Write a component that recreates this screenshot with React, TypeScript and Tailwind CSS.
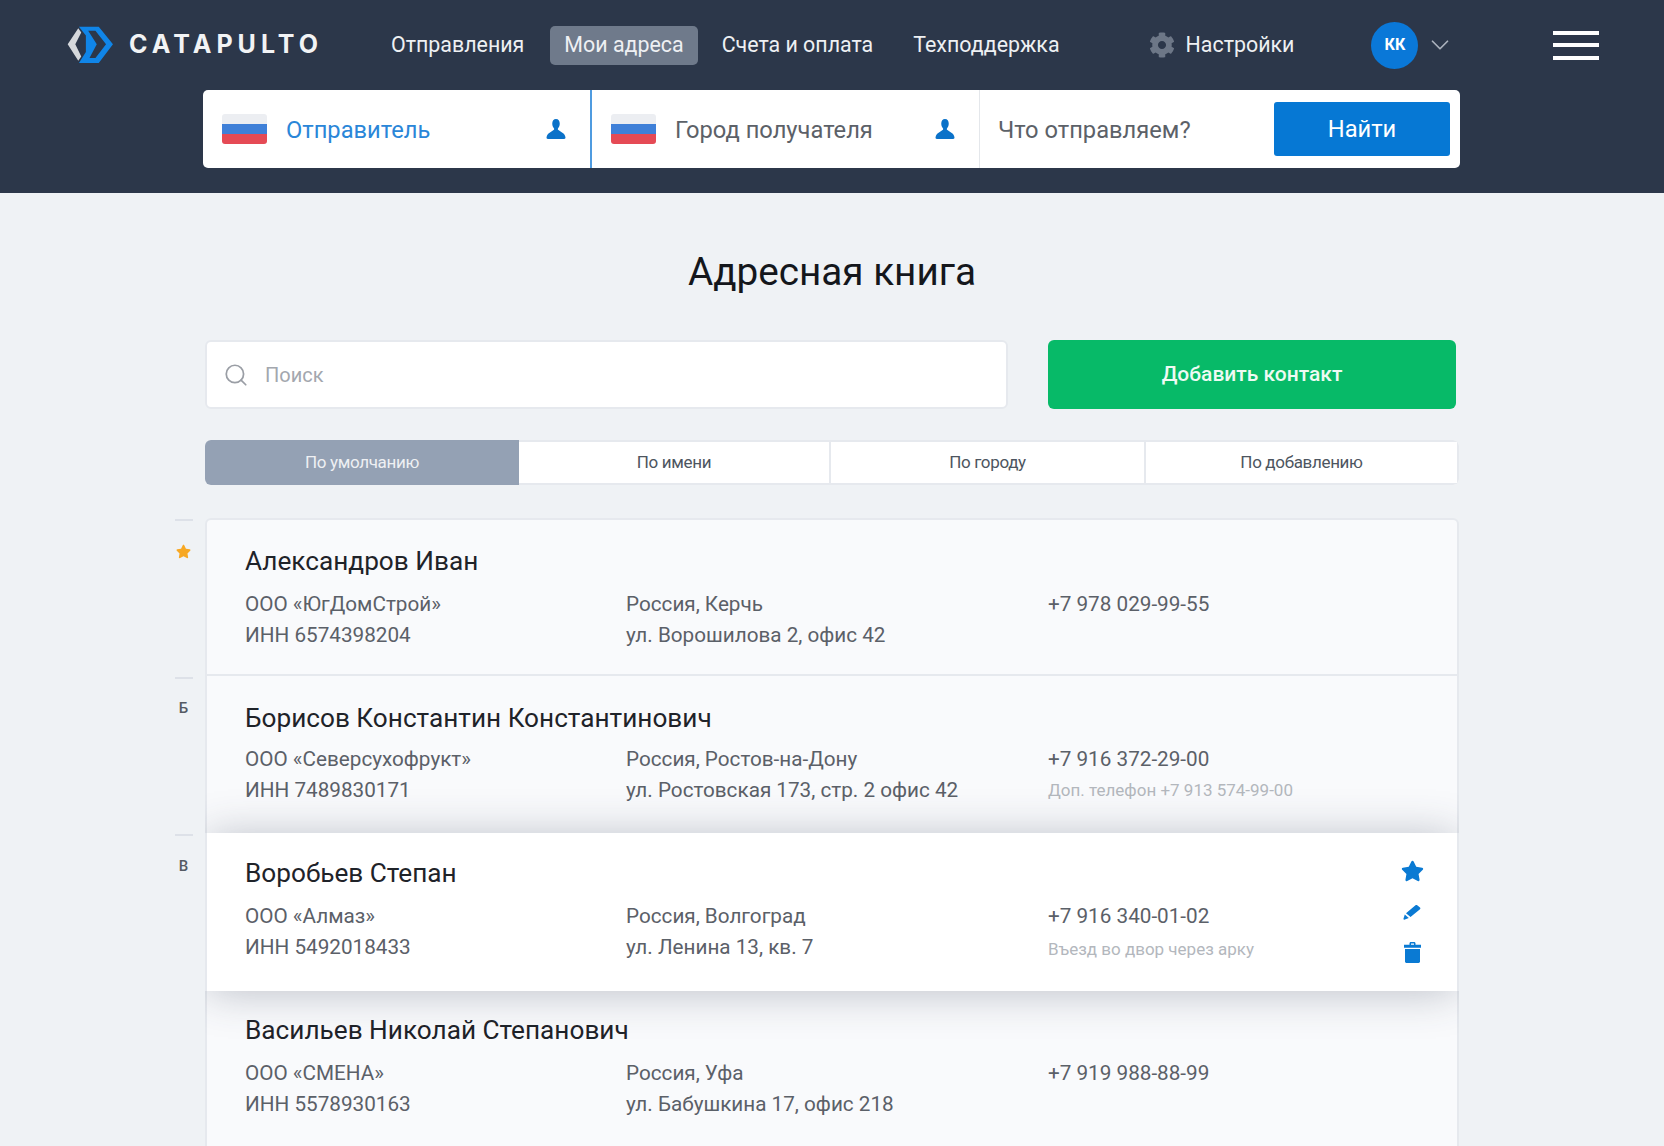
import React from "react";
import { FaCog, FaStar } from "react-icons/fa";
import { Search, ChevronDown } from "lucide-react";

const Flag = () => (
  <div className="flex h-[30px] w-[45px] shrink-0 flex-col overflow-hidden rounded-[3px]">
    <div className="flex-1 bg-[#eceef2]" />
    <div className="flex-1 bg-[#3f80d8]" />
    <div className="flex-1 bg-[#e54a55]" />
  </div>
);

const Person = () => (
  <svg viewBox="0 0 20 20" className="h-[22px] w-[22px] shrink-0" fill="#0b72c9">
    <path d="M10 1c2.200 0 3.400 1.700 3.400 4 0 1.900-.6 3.300-1.500 4.400-.4.500-.3 1.300.3 1.600l3.600 2.400c1.500.8 2.400 2 2.800 4 .1.800-.3 1.600-1.200 1.600H2.600c-.9 0-1.300-.8-1.200-1.600.4-2 1.300-3.200 2.800-4l3.600-2.400c.6-.3.7-1.100.3-1.600C7.200 8.300 6.600 6.900 6.600 5c0-2.300 1.200-4 3.400-4z" />
  </svg>
);

const Logo = () => (
  <svg viewBox="36 33 142 115" className="h-[38px] w-[47px] shrink-0">
    <path d="M70 40 38 88l32 50 9-13-18-37 18-35z" fill="#d5d8dc" />
    <path d="M72 35h60l43 53-43 57H72l21-33V62z" fill="#1085e8" />
    <path d="M100 47h22l32 41-32 42h-18l22-42z" fill="#2c374a" />
  </svg>
);

const Pencil = () => (
  <svg viewBox="0 0 18 16" className="h-[16px] w-[18px]" fill="currentColor">
    <path d="M12.500 1.200c.5-.4 1.200-.4 1.700 0l2.800 2.400c.5.500.5 1.200 0 1.600L7.500 13 3 9.200z" />
    <path d="M1.800 10.500 5.800 14l-3.900 1.600c-.8.300-1.600-.4-1.400-1.200z" />
  </svg>
);

const Trash = () => (
  <svg viewBox="0 0 17 21" className="h-[21px] w-[17px]" fill="currentColor">
    <path d="M5.500 2.800V1.400C5.500.6 6.100 0 6.900 0h3.200c.8 0 1.400.6 1.400 1.400v1.400H17v3H0v-3zM7 1.500v1.300h3V1.500z" fillRule="evenodd" />
    <path d="M1 7h15v12.600c0 .8-.6 1.400-1.400 1.400H2.400c-.8 0-1.400-.6-1.400-1.400z" />
  </svg>
);

type Row = {
  letter: React.ReactNode;
  name: string;
  org: string;
  inn: string;
  city: string;
  addr: string;
  phone: string;
  note?: string;
  active?: boolean;
  first?: boolean;
  noBorder?: boolean;
  top: string;
  gap: string;
  noteCls?: string;
};

const rows: Row[] = [
  { letter: <FaStar className="h-[15px] w-[15px] text-[#f7a823]" />, name: "Александров Иван", org: "ООО «ЮгДомСтрой»", inn: "ИНН 6574398204", city: "Россия, Керчь", addr: "ул. Ворошилова 2, офис 42", phone: "+7 978 029-99-55", first: true, top: "pt-[23px]", gap: "mt-[10px]" },
  { letter: "Б", name: "Борисов Константин Константинович", org: "ООО «Северсухофрукт»", inn: "ИНН 7489830171", city: "Россия, Ростов-на-Дону", addr: "ул. Ростовская 173, стр. 2 офис 42", phone: "+7 916 372-29-00", note: "Доп. телефон +7 913 574-99-00", noBorder: true, top: "pt-[24px]", gap: "mt-[8px]" },
  { letter: "В", name: "Воробьев Степан", org: "ООО «Алмаз»", inn: "ИНН 5492018433", city: "Россия, Волгоград", addr: "ул. Ленина 13, кв. 7", phone: "+7 916 340-01-02", note: "Въезд во двор через арку", active: true, top: "pt-[22px]", gap: "mt-[10px]", noteCls: "mt-[2px]" },
  { letter: "", name: "Васильев Николай Степанович", org: "ООО «СМЕНА»", inn: "ИНН 5578930163", city: "Россия, Уфа", addr: "ул. Бабушкина 17, офис 218", phone: "+7 919 988-88-99", top: "pt-[21px]", gap: "mt-[10px]" },
];

const tabs = [
  { label: "По умолчанию", w: "w-[314px]", on: true },
  { label: "По имени", w: "w-[312px]" },
  { label: "По городу", w: "w-[315px]" },
  { label: "По добавлению", w: "flex-1" },
];

export default function App() {
  return (
    <div className="h-[1146px] overflow-hidden bg-[#eff2f5] font-['Roboto','Liberation_Sans',sans-serif] text-[#2b2f36]">
      <header className="h-[193px] bg-[#2c374a]">
        <div className="flex h-[90px] items-center pl-[67px] text-[21.400px] text-[#eef0f3]">
          <Logo />
          <span className="ml-[15px] w-[190px] font-['Inter',sans-serif] text-[25px] font-bold tracking-[5px] whitespace-nowrap text-[#f2f3f5]">CATAPULTO</span>
          <span className="ml-[72px]">Отправления</span>
          <span className="ml-[26px] flex h-[39px] items-center rounded-[5px] bg-[#6f7a8b] px-[14px]">Мои адреса</span>
          <span className="ml-[24px]">Счета и оплата</span>
          <span className="ml-[40px]">Техподдержка</span>
          <FaCog className="ml-[89px] h-[26px] w-[26px] text-[#6d7787]" />
          <span className="ml-[11px]">Настройки</span>
          <span className="ml-[77px] flex h-[47px] w-[47px] items-center justify-center rounded-full bg-[#0a78d8] text-[16px] font-bold text-white">КК</span>
          <ChevronDown className="ml-[7px] h-[30px] w-[30px] text-[#aab1bc]" strokeWidth={1.4} />
          <div className="ml-[98px] flex w-[46px] flex-col gap-[8.500px]">
            <div className="h-[4px] bg-white" />
            <div className="h-[4px] bg-white" />
            <div className="h-[4px] bg-white" />
          </div>
        </div>
        <div className="ml-[203px] flex h-[78px] w-[1257px] items-stretch rounded-[5px] bg-white text-[23.700px]">
          <div className="flex w-[389px] items-center border-r-2 border-[#4f9be0] pl-[19px] pr-[23px] text-[#2a86d8]">
            <Flag />
            <span className="ml-[19px] flex-1 pt-[3px]">Отправитель</span>
            <Person />
          </div>
          <div className="flex w-[388px] items-center border-r border-[#e4e7eb] pl-[19px] pr-[23px] text-[#5c6168]">
            <Flag />
            <span className="ml-[19px] flex-1 pt-[3px]">Город получателя</span>
            <Person />
          </div>
          <div className="flex flex-1 items-center pl-[18px] pr-[10px] text-[#5c6168]">
            <span className="flex-1 pt-[3px]">Что отправляем?</span>
            <span className="flex h-[54px] w-[176px] items-center justify-center rounded-[3px] bg-[#0678d4] pt-[1px] text-white">Найти</span>
          </div>
        </div>
      </header>

      <main className="flex flex-col pl-[175px]">
        <h1 className="mt-[51px] h-[56px] w-[1314px] text-center text-[38.700px] leading-[56px] font-normal text-[#14171c]">Адресная книга</h1>

        <div className="ml-[30px] mt-[40px] flex h-[69px] w-[1251px] gap-[40px]">
          <div className="flex w-[803px] items-center rounded-[6px] border-2 border-[#e6e9ee] bg-white pl-[16px] text-[20px] text-[#a3a7ae]">
            <Search className="h-[26px] w-[26px] text-[#9a9ea5]" strokeWidth={1.6} />
            <span className="ml-[16px]">Поиск</span>
          </div>
          <div className="flex flex-1 items-center justify-center rounded-[6px] bg-[#07ba68] pt-[1px] text-[21px] font-medium text-[#eefaf3]">Добавить контакт</div>
        </div>

        <div className="ml-[30px] mt-[31px] flex h-[45px] w-[1254px] overflow-hidden rounded-[6px] bg-white text-[17px]">
          {tabs.map((t) => (
            <div
              key={t.label}
              className={`${t.w} flex items-center justify-center border-[#e6e9ee] tracking-[-0.02em] ${t.on ? "bg-[#94a1b4] text-[#eef0f3]" : "border-y-2 border-r-2 text-[#4d5560]"}`}
            >
              {t.label}
            </div>
          ))}
        </div>

        <div className="mt-[33px] flex w-[1284px] flex-col">
          {rows.map((r) => (
            <div key={r.name} className="flex h-[157.500px] shrink-0">
              <div className="flex w-[30px] shrink-0 flex-col pt-[1px]">
                {r.letter !== "" && (
                  <>
                    <div className="h-[2px] w-[18px] bg-[#dde1e8]" />
                    <div className="mt-[20px] flex h-[20px] w-[17px] items-center justify-center text-[15px] font-medium text-[#555b64]">{r.letter}</div>
                  </>
                )}
              </div>
              <div
                className={`flex flex-1 border-x-2 border-[#e6e9ee] pl-[38px] pr-[33px] ${r.top} ${
                  r.active
                    ? "relative z-10 bg-white shadow-[0_2px_42px_-2px_rgba(50,60,80,0.32)] [clip-path:inset(-70px_0)]"
                    : `bg-[#f9fafc] ${r.noBorder ? "" : "border-b-2"}`
                } ${r.first ? "rounded-t-[6px] border-t-2" : ""}`}
              >
                <div className="flex-1">
                  <div className="text-[26.200px] leading-[36px] text-[#1f2329]">{r.name}</div>
                  <div className={`${r.gap} flex text-[20.700px] leading-[31px] text-[#5b6068]`}>
                    <div className="w-[381px]">
                      <div>{r.org}</div>
                      <div>{r.inn}</div>
                    </div>
                    <div className="w-[422px]">
                      <div>{r.city}</div>
                      <div>{r.addr}</div>
                    </div>
                    <div>
                      <div>{r.phone}</div>
                      {r.note && <div className={`${r.noteCls ?? ""} text-[17px] text-[#b3b7bd]`}>{r.note}</div>}
                    </div>
                  </div>
                </div>
                {r.active && (
                  <div className="flex w-[24px] flex-col items-center gap-[22px] pt-[5px] text-[#0a7ad3]">
                    <FaStar className="h-[22px] w-[23px]" />
                    <Pencil />
                    <Trash />
                  </div>
                )}
              </div>
            </div>
          ))}
        </div>
      </main>
    </div>
  );
}
